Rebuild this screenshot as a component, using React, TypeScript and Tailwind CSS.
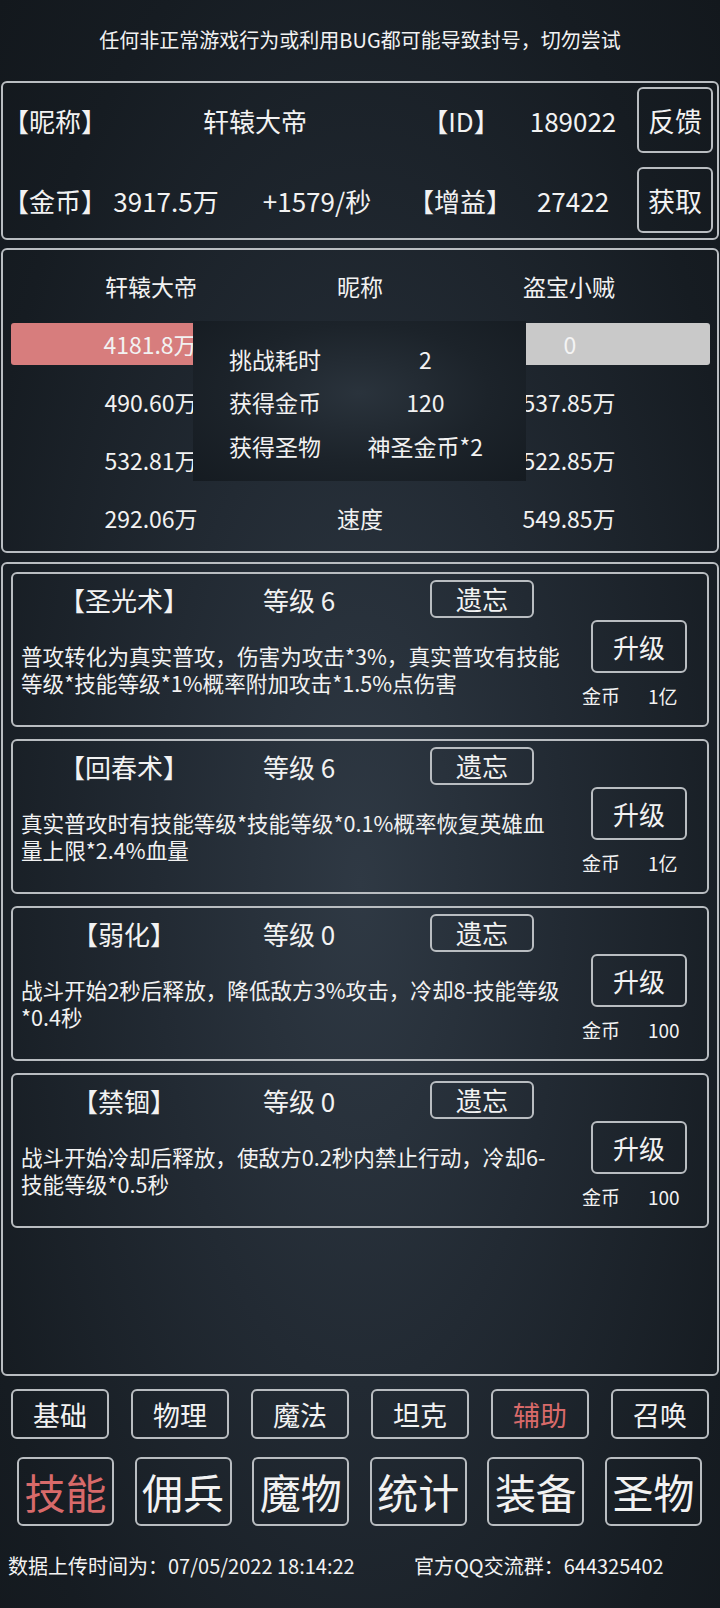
import React from "react";

// Skill page of the idle game: account header, battle summary, skill list, tabs
const FONT = { fontFamily: '"Noto Sans CJK SC", "Noto Sans", sans-serif' };

type Skill = {
	name: string;
	level: number;
	lines: string[];
	cost: string;
};

const skills: Skill[] = [
	{
		name: "【圣光术】",
		level: 6,
		lines: [
			"普攻转化为真实普攻，伤害为攻击*3%，真实普攻有技能",
			"等级*技能等级*1%概率附加攻击*1.5%点伤害",
		],
		cost: "1亿",
	},
	{
		name: "【回春术】",
		level: 6,
		lines: [
			"真实普攻时有技能等级*技能等级*0.1%概率恢复英雄血",
			"量上限*2.4%血量",
		],
		cost: "1亿",
	},
	{
		name: "【弱化】",
		level: 0,
		lines: [
			"战斗开始2秒后释放，降低敌方3%攻击，冷却8-技能等级",
			"*0.4秒",
		],
		cost: "100",
	},
	{
		name: "【禁锢】",
		level: 0,
		lines: [
			"战斗开始冷却后释放，使敌方0.2秒内禁止行动，冷却6-",
			"技能等级*0.5秒",
		],
		cost: "100",
	},
];

// middle labels of the first two rows sit under the result popup
const statRows = [
	{ left: "490.60万", mid: "", right: "537.85万" },
	{ left: "532.81万", mid: "", right: "522.85万" },
	{ left: "292.06万", mid: "速度", right: "549.85万" },
];

const subTabs = ["基础", "物理", "魔法", "坦克", "辅助", "召唤"];
const mainTabs = ["技能", "佣兵", "魔物", "统计", "装备", "圣物"];

const SkillCard: React.FC<{ skill: Skill }> = ({ skill }) => (
	<div className="flex h-[155px] rounded-[6px] border-2 border-[#b9bdc1]">
		<div className="flex flex-1 flex-col pl-[8px] pt-[6px]">
			<div className="flex h-[38px] items-center text-[26px]">
				<div className="w-[214px] -ml-[4px] text-center">{skill.name}</div>
				<div className="w-[199px] pl-[32px]">等级 {skill.level}</div>
				<button className="h-[38px] w-[104px] rounded-[6px] border-2 border-[#b9bdc1] text-[26px] leading-none">
					遗忘
				</button>
			</div>
			<div className="mt-[24px] whitespace-nowrap text-[21.6px] leading-[27px]">
				{skill.lines.map((l) => (
					<div key={l}>{l}</div>
				))}
			</div>
		</div>
		<div className="flex w-[132px] flex-col pt-[46px]">
			<button className="ml-[16px] h-[53px] w-[96px] rounded-[6px] border-2 border-[#b9bdc1] text-[26px] leading-none">
				升级
			</button>
			<div className="mt-[10px] flex items-center text-[19px] leading-[26px]">
				<span className="ml-[7px] w-[66px]">金币</span>
				<span>{skill.cost}</span>
			</div>
		</div>
	</div>
);

export default function App() {
	return (
		<div
			style={FONT}
			className="flex h-[1608px] w-[720px] flex-col overflow-hidden bg-[radial-gradient(ellipse_at_50%_55%,#2f3944_0%,#222a33_40%,#161c22_80%,#13181d_100%)] text-[#f2f2f2]"
		>
			{/* Notice */}
			<div className="flex h-[81px] items-center justify-center pb-[2px] text-[20px]">
				任何非正常游戏行为或利用BUG都可能导致封号，切勿尝试
			</div>

			{/* Account panel */}
			<div className="mx-[1px] flex h-[159px] flex-col gap-[14px] rounded-[6px] border-2 border-[#b9bdc1] pt-[4px] text-[26px]">
				<div className="flex h-[66px] items-center">
					<div className="w-[98px] text-center">【昵称】</div>
					<div className="w-[308px] text-center">轩辕大帝</div>
					<div className="w-[104px] text-center">【ID】</div>
					<div className="w-[120px] text-center">189022</div>
					<button className="ml-[4px] h-[66px] w-[76px] rounded-[6px] border-2 border-[#b9bdc1] text-[27px] leading-none">
						反馈
					</button>
				</div>
				<div className="flex h-[66px] items-center">
					<div className="w-[98px] text-center">【金币】</div>
					<div className="w-[130px] text-center">3917.5万</div>
					<div className="w-[172px] text-center">+1579/秒</div>
					<div className="w-[114px] text-center">【增益】</div>
					<div className="w-[112px] text-center">27422</div>
					<button className="ml-[8px] h-[66px] w-[76px] rounded-[6px] border-2 border-[#b9bdc1] text-[27px] leading-none">
						获取
					</button>
				</div>
			</div>

			{/* Battle panel */}
			<div className="relative mx-[1px] mt-[8px] flex h-[305px] flex-col rounded-[6px] border-2 border-[#b9bdc1] pt-[7px] text-[23px]">
				<div className="flex h-[58px] items-center">
					<div className="w-[296px] text-center">轩辕大帝</div>
					<div className="w-[122px] text-center">昵称</div>
					<div className="w-[296px] text-center">盗宝小贼</div>
				</div>
				<div className="flex h-[58px] items-center">
					<div className="ml-[8px] flex h-[42px] w-[342px] items-center rounded-[3px] bg-[#d77d7d]">
						<span className="w-[278px] text-center">4181.8万</span>
					</div>
					<div className="ml-[16px] flex h-[42px] w-[341px] items-center justify-end rounded-[3px] bg-[#c9c9c9]">
						<span className="w-[280px] text-center text-[#f4f4f4]">0</span>
					</div>
				</div>
				{statRows.map((r) => (
					<div key={r.left} className="flex h-[58px] items-center">
						<div className="w-[296px] text-center">{r.left}</div>
						<div className="w-[122px] text-center">{r.mid}</div>
						<div className="w-[296px] text-center">{r.right}</div>
					</div>
				))}

				{/* Result popup */}
				<div className="absolute left-[190px] top-[71px] flex h-[160px] w-[333px] flex-col bg-[radial-gradient(ellipse_at_50%_45%,#2a333c_0%,#1c232a_55%,#151b21_100%)] pt-[16px] text-[23px]">
					{[
						["挑战耗时", "2"],
						["获得金币", "120"],
						["获得圣物", "神圣金币*2"],
					].map(([k, v]) => (
						<div key={k} className="flex h-[43.5px] items-center">
							<span className="w-[134px] pl-[36px]">{k}</span>
							<span className="w-[206px] text-center">{v}</span>
						</div>
					))}
				</div>
			</div>

			{/* Skill list */}
			<div className="mx-[1px] mt-[9px] flex h-[814px] flex-col gap-[12px] rounded-[6px] border-2 border-[#b9bdc1] px-[8px] pt-[8px]">
				{skills.map((s) => (
					<SkillCard key={s.name} skill={s} />
				))}
			</div>

			{/* Sub tabs */}
			<div className="ml-[11px] mt-[13px] flex gap-[22px]">
				{subTabs.map((t) => (
					<button
						key={t}
						className={`h-[50px] w-[98px] rounded-[6px] border-2 border-[#b9bdc1] text-[27px] leading-none ${
							t === "辅助" ? "text-[#d86a6a]" : ""
						}`}
					>
						{t}
					</button>
				))}
			</div>

			{/* Main tabs */}
			<div className="ml-[17px] mt-[18px] flex w-[685px] justify-between">
				{mainTabs.map((t) => (
					<button
						key={t}
						className={`h-[69px] w-[97px] rounded-[6px] border-2 border-[#b9bdc1] text-[41px] leading-none ${
							t === "技能" ? "text-[#d86a6a]" : ""
						}`}
					>
						{t}
					</button>
				))}
			</div>

			{/* Footer */}
			<div className="mt-[26px] flex h-[28px] items-center text-[20px]">
				<span className="ml-[8px] w-[406px]">数据上传时间为：07/05/2022 18:14:22</span>
				<span>官方QQ交流群：644325402</span>
			</div>
		</div>
	);
}
